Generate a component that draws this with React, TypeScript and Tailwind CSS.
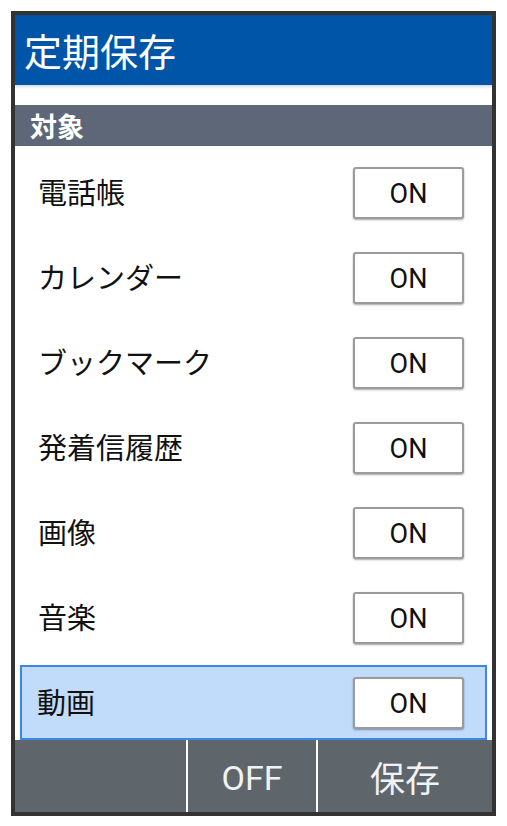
import React from 'react';

const items = ['電話帳', 'カレンダー', 'ブックマーク', '発着信履歴', '画像', '音楽'];

const OnButton: React.FC = () => (
    <div className="w-[111px] h-[52px] pt-[4px] bg-white border-2 border-[#9b9b9b] rounded-[3px] shadow-[0_1px_2px_rgba(0,0,0,0.35)] flex items-center justify-center text-[27px] text-[#111] font-['Roboto',sans-serif] leading-none">
        ON
    </div>
);

export default function App() {
    return (
        <div className="w-[507px] h-[826px] bg-white pt-[11px] pl-[11px] font-['Noto_Sans_CJK_JP','Noto_Sans',sans-serif]">
            <div className="w-[485px] h-[805px] border-4 border-[#333333] flex flex-col overflow-hidden">
                <div className="h-[70px] shrink-0 bg-[#0055a8] text-white pl-[9px] flex items-center text-[38px] leading-none">
                    定期保存
                </div>
                <div className="h-[20px] shrink-0 bg-white bg-gradient-to-b from-[#d8dde3] to-white to-[20%]" />
                <div className="h-[41px] shrink-0 bg-[#5d6777] text-white pl-[15px] flex items-center text-[27px] font-bold leading-none">
                    対象
                </div>
                <div className="flex-1 pt-[4px] flex flex-col">
                    {items.map((label) => (
                        <div key={label} className="h-[85px] shrink-0 pl-[23px] pr-[28px] flex items-center justify-between">
                            <span className="text-[29px] text-[#111] leading-none -mt-[3px]">{label}</span>
                            <OnButton />
                        </div>
                    ))}
                    <div className="mt-[5px] mx-[5px] h-[75px] shrink-0 border-2 border-[#3b87e6] bg-[#c0dcfa] pl-[15px] pr-[21px] flex items-center justify-between">
                        <span className="text-[29px] text-[#111] leading-none -mt-[3px]">動画</span>
                        <OnButton />
                    </div>
                </div>
                <div className="h-[72px] shrink-0 bg-[#5e666b] flex text-[#f2f2f2] leading-none">
                    <div className="w-[173px] border-r-2 border-white" />
                    <div className="w-[130px] border-r-2 border-white flex items-center justify-center pt-[4px] text-[34px] font-['Roboto',sans-serif]">
                        OFF
                    </div>
                    <div className="flex-1 flex items-center justify-center text-[35px]">保存</div>
                </div>
            </div>
        </div>
    );
}
